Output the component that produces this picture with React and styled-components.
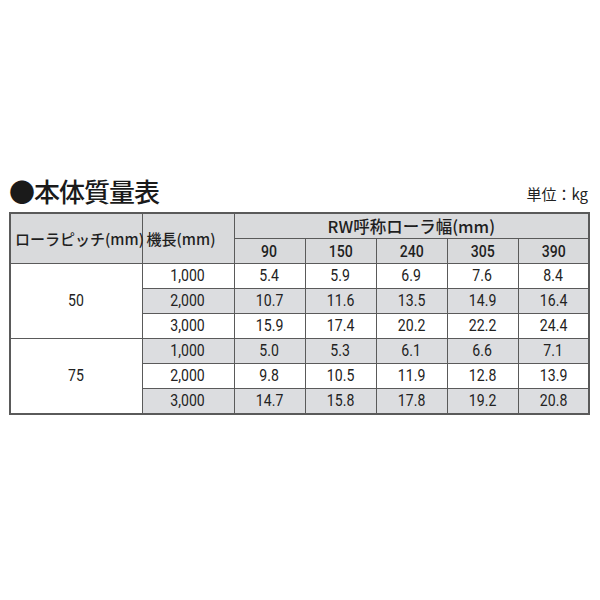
import React from "react";
import styled, { createGlobalStyle } from "styled-components";

const GlobalStyle = createGlobalStyle`
  html, body {
    margin: 0;
    padding: 0;
    background: #ffffff;
  }
  body {
    font-family: Roboto, "Noto Sans CJK JP", sans-serif;
    color: #222;
  }
`;

const widths = [90, 150, 240, 305, 390];

const groups = [
  {
    pitch: "50",
    rows: [
      { length: "1,000", values: ["5.4", "5.9", "6.9", "7.6", "8.4"] },
      { length: "2,000", values: ["10.7", "11.6", "13.5", "14.9", "16.4"] },
      { length: "3,000", values: ["15.9", "17.4", "20.2", "22.2", "24.4"] },
    ],
  },
  {
    pitch: "75",
    rows: [
      { length: "1,000", values: ["5.0", "5.3", "6.1", "6.6", "7.1"] },
      { length: "2,000", values: ["9.8", "10.5", "11.9", "12.8", "13.9"] },
      { length: "3,000", values: ["14.7", "15.8", "17.8", "19.2", "20.8"] },
    ],
  },
];

const Page = styled.div`
  padding: 175px 12px 0 9px;
`;

const TitleBar = styled.div`
  display: flex;
  justify-content: space-between;
  align-items: flex-end;
  margin-bottom: 6px;
`;

const Title = styled.h1`
  margin: 0;
  font-family: "Noto Sans CJK JP", sans-serif;
  font-size: 26px;
  font-weight: 500;
  line-height: 31px;
  letter-spacing: -1px;
  color: #1a1a1a;
`;

const Unit = styled.span`
  font-family: "Noto Sans CJK JP", sans-serif;
  font-size: 15px;
  line-height: 18px;
  margin-bottom: 3px;
  color: #222;
`;

const Table = styled.table`
  width: 579px;
  border-collapse: collapse;
  table-layout: fixed;
  border: 2px solid #5a5a5a;
`;

const Head = styled.th`
  background: #d9dadc;
  border: 1px solid #5a5a5a;
  height: 24px;
  padding: 0;
  font-family: "Noto Sans CJK JP", sans-serif;
  font-size: ${(p) => p.$size || 15}px;
  font-weight: 500;
  color: #1f1f1f;
  text-align: ${(p) => (p.$left ? "left" : "center")};
  padding-left: ${(p) => (p.$left ? "4px" : "0")};
  white-space: nowrap;
`;

const Cell = styled.td`
  background: ${(p) => (p.$shade ? "#dcdde0" : "#ffffff")};
  border: 1px solid #5a5a5a;
  height: 24px;
  padding: 0;
  text-align: center;
  color: #222;
`;

const Num = styled.span`
  display: inline-block;
  font-family: Roboto, "Liberation Sans", sans-serif;
  font-size: 16px;
  font-weight: ${(p) => (p.$bold ? 500 : 400)};
  line-height: 20px;
  transform: scaleX(0.88);
  transform-origin: center;
`;

export default function App() {
  return (
    <Page>
      <GlobalStyle />
      <TitleBar>
        <Title>●本体質量表</Title>
        <Unit>単位：kg</Unit>
      </TitleBar>
      <Table>
        <colgroup>
          <col style={{ width: 132 }} />
          <col style={{ width: 92 }} />
          {widths.map((w) => (
            <col key={w} style={{ width: 71 }} />
          ))}
        </colgroup>
        <thead>
          <tr>
            <Head rowSpan={2} $left>
              ローラピッチ(mm)
            </Head>
            <Head rowSpan={2} $left>
              機長(mm)
            </Head>
            <Head colSpan={5} $size={16.5}>
              RW呼称ローラ幅(mm)
            </Head>
          </tr>
          <tr>
            {widths.map((w) => (
              <Head key={w}>
                <Num $bold>{w}</Num>
              </Head>
            ))}
          </tr>
        </thead>
        <tbody>
          {groups.map((g, gi) =>
            g.rows.map((r, ri) => {
              const shade = (gi * 3 + ri) % 2 === 1;
              return (
                <tr key={g.pitch + r.length}>
                  {ri === 0 && (
                    <Cell rowSpan={3}>
                      <Num>{g.pitch}</Num>
                    </Cell>
                  )}
                  <Cell $shade={shade}>
                    <Num>{r.length}</Num>
                  </Cell>
                  {r.values.map((v, vi) => (
                    <Cell key={vi} $shade={shade}>
                      <Num>{v}</Num>
                    </Cell>
                  ))}
                </tr>
              );
            })
          )}
        </tbody>
      </Table>
    </Page>
  );
}
